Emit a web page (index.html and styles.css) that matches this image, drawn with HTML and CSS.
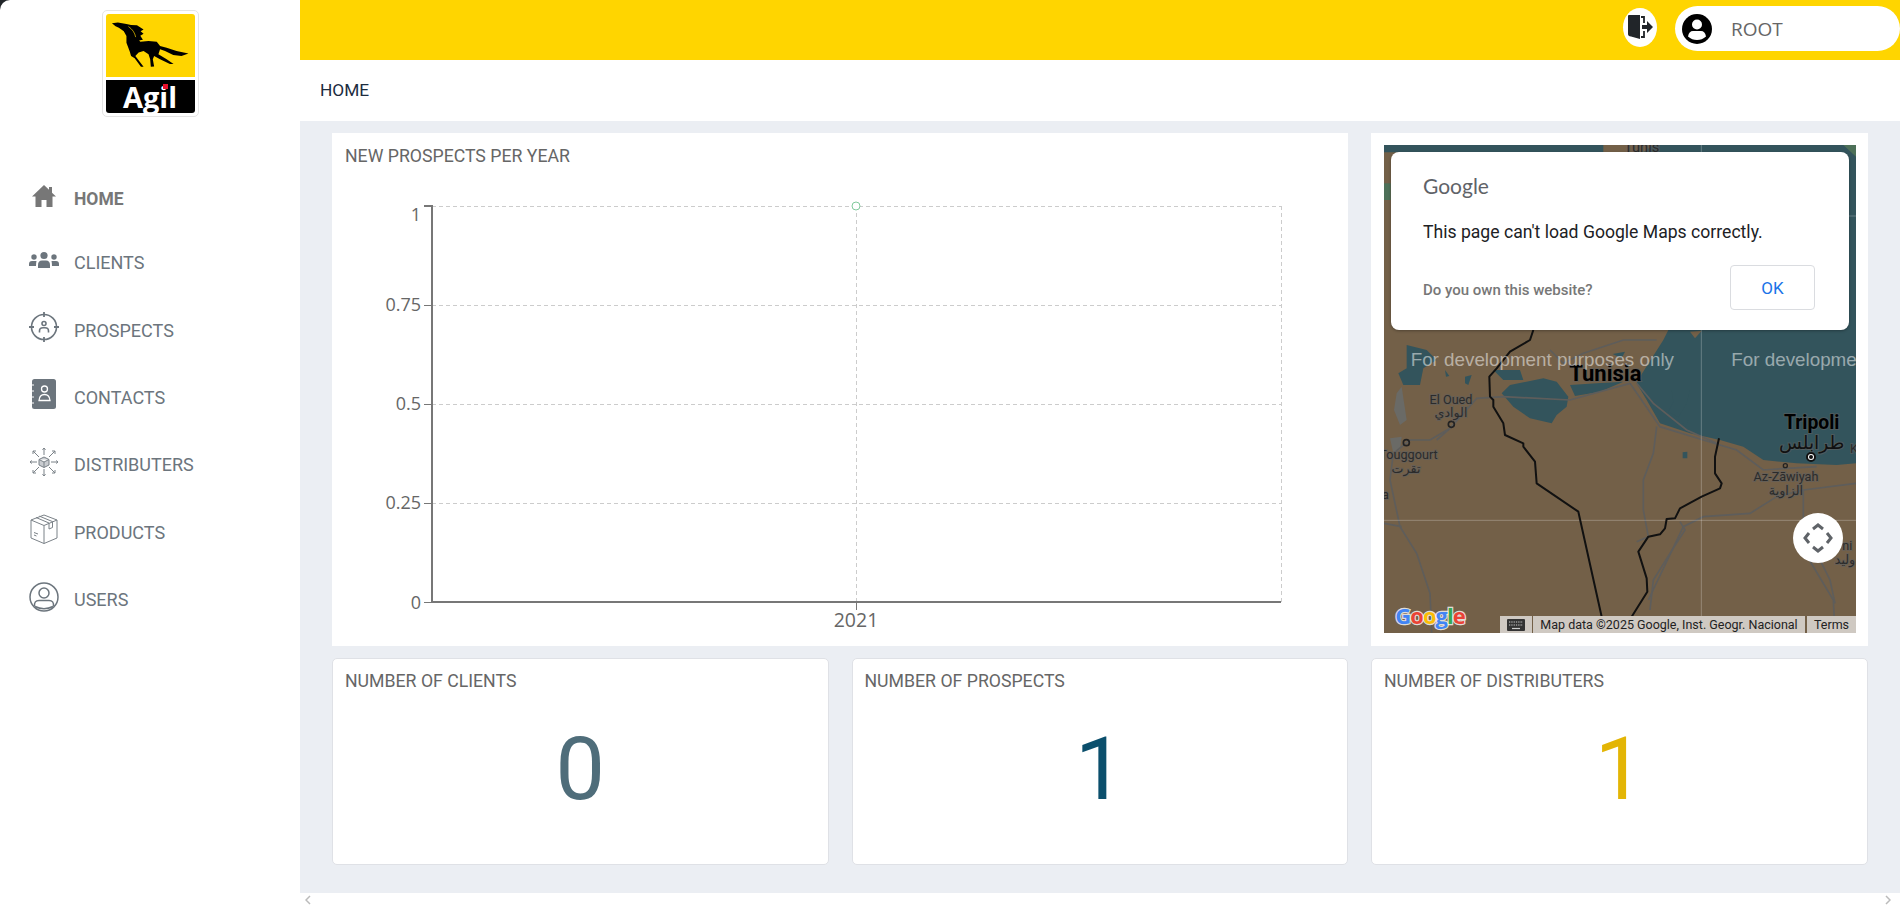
FILE: index.html
```html
<!DOCTYPE html>
<html lang="en">
  <head>
    <meta charset="UTF-8" />
    <title>Agil Dashboard</title>
    <link rel="stylesheet" href="styles.css">
  </head>
  <body>
    <div class="app">
      <aside class="sidebar">
        <div class="logo-wrap">
          <div class="logo">
            <div class="logo-top">
              <svg viewBox="316 40 270 187" class="horse">
                <path d="M334 66 L352 64 L378 68 L392 71 L410 72 L430 85 L421 90 L430 98 L420 104 L428 116 L415 118 L408 108 L420 122 L445 120 L470 122 L480 135 L500 140 L530 150 L566 158 L545 165 L520 162 L495 150 L480 145 L475 160 L500 175 L521 190 L510 190 L480 175 L462 165 L458 175 L462 197 L452 198 L450 175 L445 160 L430 150 L415 155 L405 165 L430 198 L422 198 L403 172 L392 165 L388 152 L378 125 L378 105 L370 90 L355 80 L345 75 Z" fill="#000" />
                <path d="M384 76 Q402 88 406 108" fill="none" stroke="#ffd500" stroke-width="2" />
              </svg>
            </div>
            <div class="logo-bottom"><span class="logo-name">Agil<i class="logo-dot"></i></span></div>
          </div>
        </div>
        <nav class="nav">
          <a class="nav-item active">
            <svg class="nav-icon" viewBox="0 0 30 30"><path d="M15 4 L3 15.500 L6.500 15.500 V26 H12.500 V19 H17.500 V26 H23.500 V15.500 L27 15.500 L23 11.700 V6 H20 V8.800 Z" fill="#777" /></svg>
            <span>HOME</span>
          </a>
          <a class="nav-item">
            <svg class="nav-icon" viewBox="0 0 30 30" fill="#6c757d">
              <circle cx="15" cy="10.500" r="3.600" /><path d="M9 23 V20 Q9 15.500 13 15.500 H17 Q21 15.500 21 20 V23 Z" />
              <circle cx="5" cy="12" r="2.700" /><path d="M0 21 V19 Q0 16 3 16 H7.500 Q7 18 7 21 Z" />
              <circle cx="25" cy="12" r="2.700" /><path d="M30 21 V19 Q30 16 27 16 H22.500 Q23 18 23 21 Z" />
            </svg>
            <span>CLIENTS</span>
          </a>
          <a class="nav-item">
            <svg class="nav-icon" viewBox="0 0 30 30" fill="none" stroke="#6c757d" stroke-width="1.600">
              <circle cx="15" cy="15" r="12.500" />
              <path d="M15 0 V5 M15 25 V30 M0 15 H5 M25 15 H30" stroke-width="1.800" />
              <circle cx="15" cy="11.500" r="2" />
              <path d="M10.500 20.500 V19 Q10.500 15.800 14 15.800 H16 Q19.500 15.800 19.500 19 V20.500" />
            </svg>
            <span>PROSPECTS</span>
          </a>
          <a class="nav-item">
            <svg class="nav-icon" viewBox="0 0 30 30">
              <rect x="3" y="0" width="24" height="30" rx="2.500" fill="#6c757d" />
              <path d="M3 6 H5 M3 12 H5 M3 18 H5 M3 24 H5" stroke="#fff" stroke-width="1" />
              <g fill="none" stroke="#fff" stroke-width="1.300">
                <circle cx="15.500" cy="10" r="3" />
                <path d="M10 21.500 Q10.500 15.500 15.500 15.500 Q20.500 15.500 21 21.500 Z" />
              </g>
            </svg>
            <span>CONTACTS</span>
          </a>
          <a class="nav-item">
            <svg class="nav-icon" viewBox="0 0 30 30" fill="none" stroke="#7b8288" stroke-width="1">
              <path d="M15 10 L20 12.500 V18 L15 20.500 L10 18 V12.500 Z M10 12.500 L15 15 L20 12.500 M15 15 V20.500" fill="#c9ccd0" />
              <path d="M15 8 V1 M13.500 2.800 L15 1 L16.500 2.800 M15 22 V29 M13.500 27.200 L15 29 L16.500 27.200 M8 15 H1 M2.800 13.500 L1 15 L2.800 16.500 M22 15 H29 M27.200 13.500 L29 15 L27.200 16.500" />
              <path d="M10 10 L4 4 M4 7 V4 H7 M20 10 L26 4 M23 4 H26 V7 M10 20 L4 26 M4 23 V26 H7 M20 20 L26 26 M23 26 H26 V23" />
            </svg>
            <span>DISTRIBUTERS</span>
          </a>
          <a class="nav-item">
            <svg class="nav-icon" viewBox="0 0 30 30" fill="none" stroke="#7b8288" stroke-width="1">
              <path d="M15 1 L28 6 V24 L15 29.500 L2 24 V6 Z" />
              <path d="M2 6 L15 11.500 L28 6 M15 11.500 V29.500" />
              <path d="M7 3.500 L20 9 V15 L23.500 13.500 V7.600 L10.500 2.200" />
              <path d="M5 18.500 L9 20 M5 21 L7.500 22" />
            </svg>
            <span>PRODUCTS</span>
          </a>
          <a class="nav-item">
            <svg class="nav-icon" viewBox="0 0 30 30" fill="none" stroke="#6c757d" stroke-width="1.500">
              <circle cx="15" cy="15" r="14" />
              <circle cx="15" cy="11" r="5" />
              <path d="M5.500 24 Q5 18.500 10 18.500 H20 Q25 18.500 24.500 24" />
              <path d="M6 24.500 Q15 29 24 24.500" />
            </svg>
            <span>USERS</span>
          </a>
        </nav>
      </aside>

      <main class="main">
        <header class="topbar">
          <button class="logout-btn">
            <svg viewBox="0 0 26 26" width="26" height="26">
              <path d="M1 2 Q1 1 2 1 H13 V25 L4 22.500 Q1 22 1 20 Z" fill="#212529" />
              <path d="M14 3 H17 V9 M17 17 V23 H14" fill="none" stroke="#212529" stroke-width="1.800" />
              <path d="M15 11 H20 V7 L26 13 L20 19 V15 H15 Z" fill="#212529" />
            </svg>
          </button>
          <div class="user-pill">
            <svg viewBox="0 0 30 30" width="30" height="30">
              <circle cx="15" cy="15" r="15" fill="#000" />
              <circle cx="15" cy="10.500" r="5" fill="#fff" />
              <path d="M6 22.500 Q7 17 11 17 H19 Q23 17 24 22.500 Q20 26 15 26 Q10 26 6 22.500 Z" fill="#fff" />
            </svg>
            <span>ROOT</span>
          </div>
        </header>
        <div class="crumb">HOME</div>

        <section class="content">
          <div class="card chart-card">
            <div class="card-title chart-title">NEW PROSPECTS PER YEAR</div>
            <svg class="chart" viewBox="332 170 1016 476">
              <g stroke="#ccc" stroke-dasharray="4 3" fill="none" shape-rendering="crispEdges">
                <path d="M432 206 H1281 M432 305 H1281 M432 404 H1281 M432 503 H1281" />
                <path d="M1281 206 V602 M856 206 V602" />
              </g>
              <g stroke="#777" fill="none" shape-rendering="crispEdges">
                <path d="M424 206 H432 V602 H1281" stroke-width="1.500" />
                <path d="M424 305 H432 M424 404 H432 M424 503 H432 M424 602 H432 M856 602 V610" stroke-width="1" />
              </g>
              <circle cx="856" cy="206" r="4" fill="#fff" stroke="#82ca9d" />
              <g class="chart-label" text-anchor="end">
                <text x="421" y="221">1</text>
                <text x="421" y="311">0.75</text>
                <text x="421" y="410">0.5</text>
                <text x="421" y="509">0.25</text>
                <text x="421" y="609">0</text>
              </g>
              <text class="chart-label chart-year" x="856" y="627" text-anchor="middle">2021</text>
            </svg>
          </div>

          <div class="card map-card">
            <div class="map">
              <svg class="map-svg" viewBox="42 -585 1416 1464">
                <rect x="42" y="-585" width="1416" height="1464" fill="#736048" />
                <path d="M42 -585 V-563 H700 L860 -560 L900 -40 L880 0 L810 110 L800 130 L830 180 L870 250 L960 280 L1050 300 L1120 320 L1180 360 L1280 370 L1400 375 L1458 370 V-585 Z" fill="#33545c" />
                <path d="M700 -585 H850 L820 -563 H700 Z" fill="#736048" />
                <path d="M1420 -585 H1458 V-550 Z" fill="#4d7058" />
                <path d="M42 -470 H62 V-420 H42 Z" fill="#4d7058" />
                <path d="M960 -25 L995 -28 L975 -5 Z" fill="#736048" />
                <path d="M80 160 L95 140 L110 240 L90 255 L72 210 Z M60 295 L95 290 L90 330 L70 340 Z" fill="#6a6a66" />
                <g fill="#33545c">
                  <path d="M110 15 L170 30 L200 60 L160 85 L150 135 L100 135 L85 100 L110 85 Z" />
                  <path d="M395 160 L420 135 L520 115 L560 125 L595 170 L590 200 L560 225 L545 250 L480 235 L430 200 Z" />
                  <path d="M600 135 L680 130 L760 125 L690 155 L615 168 Z" />
                  <path d="M370 90 L450 90 L460 120 L400 120 Z" />
                  <path d="M905 150 L960 150 L950 190 L925 232 L895 215 L910 185 Z" />
                  <path d="M938 252 L955 240 L945 265 Z M938 337 L952 335 L952 355 L938 355 Z M728 42 L765 35 L755 55 Z" />
                  <path d="M285 110 L305 105 L295 135 L285 130 Z M225 90 L238 108 L228 110 Z" />
                </g>
                <g fill="none" stroke="#5e5d5b" stroke-width="5">
                  <path d="M60 420 L90 560 L140 640 L180 760 L185 878" />
                  <path d="M42 550 L95 560" />
                  <path d="M860 260 L850 340 L820 420 L820 510 L835 590 L800 605" />
                  <path d="M835 780 L940 560 L1000 530 L1140 520 L1220 470 L1300 450 L1458 430" />
                  <path d="M1300 450 L1300 630 L1390 780 L1395 878" />
                  <path d="M780 130 L870 260 L1000 300 L1100 330 L1180 390 L1250 385 L1340 380" />
                  <path d="M200 300 L240 265 L320 175 L400 170 L600 180 L780 130" />
                  <path d="M540 30 L580 70 L640 40 L760 0 L860 0" />
                  <path d="M120 300 L180 300 L240 265 M60 420 L70 340 L120 300" />
                  <path d="M800 130 L850 190 L950 270 L1040 310" />
                  <path d="M930 545 L945 570 L900 640 L850 720 L840 810" />
                  <path d="M1340 640 L1380 720 L1395 790" />
                </g>
                <path d="M994 -585 V828 M42 541 H1458 M1000 -372 H1458" stroke="#fff" stroke-opacity="0.25" stroke-width="3" fill="none" />
                <g fill="none" stroke="#111" stroke-width="6" stroke-linejoin="round">
                  <path d="M490 -30 L480 0 L420 35 L380 85 L358 110 L360 170 L370 180 L370 200 L400 250 L405 285 L460 310 L460 320 L495 365 L500 430 L625 515 L695 830" />
                  <path d="M1047 295 L1035 350 L1035 400 L1055 430 L1050 445 L995 470 L930 505 L915 535 L890 537 L885 565 L870 583 L835 590 L805 635 L830 715 L832 755 L785 830" />
                </g>
                <g fill="none" stroke="#222" stroke-width="5">
                  <circle cx="244" cy="253" r="9" /><circle cx="109" cy="308" r="9" /><circle cx="1246" cy="377" r="6" stroke-width="4" />
                </g>
                <circle cx="1323" cy="351" r="12" fill="#fff" stroke="#111" stroke-width="6" />
                <circle cx="1323" cy="351" r="6" fill="#111" />
                <g class="map-label" text-anchor="middle">
                  <text x="243" y="192">El Oued</text>
                  <text x="243" y="232" class="arabic">الوادي</text>
                  <text x="203" y="358" text-anchor="end">Touggourt</text>
                  <text x="108" y="398" class="arabic">تقرت</text>
                  <text x="1248" y="424">Az-Zāwiyah</text>
                  <text x="1248" y="466" class="arabic">الزاوية</text>
                  <text x="46" y="478">a</text>
                  <text x="1452" y="338">K</text>
                  <text x="1432" y="630">ni</text>
                  <text x="1425" y="672" class="arabic">وليد</text>
                  <text x="815" y="-565" class="map-top">Tunis</text>
                  <text x="706" y="122" class="map-big map-tunisia">Tunisia</text>
                  <text x="1325" y="268" class="map-big">Tripoli</text>
                  <text x="1325" y="326" class="arabic map-big-ar">طرابلس</text>
                </g>
                <text class="map-dev" x="122" y="79">For development purposes only</text>
                <text class="map-dev" x="1084" y="79">For development purposes only</text>
                <text class="map-google" x="76" y="851"><tspan fill="#4285f4">G</tspan><tspan fill="#ea4335">o</tspan><tspan fill="#fbbc05">o</tspan><tspan fill="#4285f4">g</tspan><tspan fill="#34a853">l</tspan><tspan fill="#ea4335">e</tspan></text>
              </svg>

              <div class="map-dialog">
                <div class="dialog-logo">Google</div>
                <div class="dialog-text">This page can't load Google Maps correctly.</div>
                <div class="dialog-foot">
                  <span class="dialog-own">Do you own this website?</span>
                  <button class="dialog-ok">OK</button>
                </div>
              </div>

              <button class="map-move">
                <svg viewBox="0 0 30 30" width="30" height="30" fill="none" stroke="#5f6368" stroke-width="3">
                  <path d="M10 6 L15 2 L20 6 M10 24 L15 28 L20 24 M6 10 L2 15 L6 20 M24 10 L28 15 L24 20" />
                </svg>
              </button>

              <div class="map-attrib">
                <span class="attrib-key">
                  <svg viewBox="0 0 18 12" width="18" height="12">
                    <rect width="18" height="12" rx="1" fill="#333" />
                    <path d="M2 3 H16 M2 6 H16" stroke="#ccc" stroke-width="1.200" stroke-dasharray="1.300 1" />
                    <path d="M5 9.500 H13" stroke="#ccc" stroke-width="1.200" />
                  </svg>
                </span>
                <span class="attrib-data">Map data ©2025 Google, Inst. Geogr. Nacional</span>
                <span class="attrib-terms">Terms</span>
              </div>
            </div>
          </div>

          <div class="card stat-card">
            <div class="card-title">NUMBER OF CLIENTS</div>
            <div class="stat-value stat-clients">0</div>
          </div>
          <div class="card stat-card">
            <div class="card-title">NUMBER OF PROSPECTS</div>
            <div class="stat-value stat-prospects">1</div>
          </div>
          <div class="card stat-card">
            <div class="card-title">NUMBER OF DISTRIBUTERS</div>
            <div class="stat-value stat-distributers">1</div>
          </div>
        </section>

        <div class="scroll-strip">
          <svg viewBox="0 0 6 10" width="6" height="10"><path d="M5 1 L1 5 L5 9" fill="none" stroke="#bbb" stroke-width="1.500" /></svg>
          <svg viewBox="0 0 6 10" width="6" height="10"><path d="M1 1 L5 5 L1 9" fill="none" stroke="#bbb" stroke-width="1.500" /></svg>
        </div>
      </main>
    </div>
  </body>
</html>
```

FILE: styles.css
```css
* {
  box-sizing: border-box;
}
html,
body {
  margin: 0;
  height: 100%;
  overflow: hidden;
}
body {
  font-family: Roboto, "Liberation Sans", sans-serif;
  background-color: #212529;
  color: #666;
}
.app {
  display: flex;
  height: 906px;
}

/* sidebar */
.sidebar {
  width: 300px;
  flex-shrink: 0;
  background-color: white;
  border-top-left-radius: 10px;
}
.logo-wrap {
  display: flex;
  justify-content: center;
  padding-top: 10px;
}
.logo {
  width: 97px;
  height: 107px;
  padding: 3px;
  background: white;
  border: 1px solid #e4e4e4;
  border-radius: 5px;
  display: flex;
  flex-direction: column;
  gap: 3px;
}
.logo-top {
  height: 63px;
  background-color: #ffd500;
  border-radius: 3px 3px 0 0;
}
.horse {
  display: block;
  width: 100%;
  height: 100%;
}
.logo-bottom {
  flex: 1;
  background-color: black;
  border-radius: 0 0 3px 3px;
  display: flex;
  align-items: center;
  justify-content: center;
}
.logo-name {
  position: relative;
  color: white;
  font-family: "Open Sans", sans-serif;
  font-weight: 700;
  font-size: 29px;
  line-height: 1;
}
.logo-dot {
  position: absolute;
  top: 2px;
  left: 40px;
  width: 5px;
  height: 5px;
  background-color: #e8112d;
}
.nav {
  margin-top: 52px;
}
.nav-item {
  height: 67.4px;
  padding-left: 29px;
  display: flex;
  align-items: center;
  gap: 15px;
  font-size: 18px;
  color: #6c757d;
}
.nav-item.active {
  height: 60px;
  font-size: 17.5px;
  font-weight: 700;
  color: #777;
}
.nav-icon {
  width: 30px;
  height: 30px;
  margin-bottom: 6px;
  flex-shrink: 0;
}

/* main column */
.main {
  flex: 1;
  min-width: 0;
  display: flex;
  flex-direction: column;
  background-color: white;
}
.topbar {
  height: 60px;
  background-color: #ffd500;
  display: flex;
  align-items: center;
  justify-content: flex-end;
  gap: 18px;
}
.logout-btn {
  width: 34px;
  height: 39px;
  padding: 0;
  border: none;
  border-radius: 50%;
  background-color: white;
  display: flex;
  align-items: center;
  justify-content: center;
  margin-top: -6px;
}
.user-pill {
  width: 225px;
  height: 45px;
  padding-left: 7px;
  background-color: white;
  border-radius: 23px;
  display: flex;
  align-items: center;
  gap: 19px;
  font-family: "Open Sans", sans-serif;
  font-size: 19px;
  color: #666;
  margin-top: -3px;
}
.crumb {
  height: 61px;
  padding: 0 0 2px 20px;
  display: flex;
  align-items: center;
  font-size: 17.3px;
  color: #1d2c3f;
}
.content {
  flex: 1;
  display: grid;
  grid-template-columns: repeat(3, 1fr);
  grid-template-rows: 513px 207px;
  column-gap: 23px;
  row-gap: 12px;
  padding: 12px 32px 28px;
  background-color: #ebeef3;
}
.card {
  background-color: white;
}
.card-title {
  font-size: 17.7px;
  line-height: 20px;
  color: #666;
}
.chart-card {
  grid-column: span 2;
  display: flex;
  flex-direction: column;
}
.chart-title {
  height: 37px;
  padding: 13px 0 0 13px;
}
.chart {
  display: block;
  width: 100%;
  height: 476px;
}
.chart-label text,
text.chart-label {
  font-family: "Open Sans", sans-serif;
  font-size: 18px;
  fill: #666;
}
text.chart-year {
  font-size: 19.5px;
}

/* map */
.map-card {
  padding: 12px 12px 13px 13px;
}
.map {
  position: relative;
  height: 488px;
  overflow: hidden;
}
.map-svg {
  display: block;
  width: 472px;
  height: 488px;
}
.map-label text {
  font-family: Roboto, sans-serif;
  font-size: 38px;
  fill: #2b2b2b;
  stroke: rgba(95, 95, 95, 0.6);
  stroke-width: 6px;
  paint-order: stroke;
}
.map-label text.arabic {
  font-family: "DejaVu Sans", sans-serif;
  font-size: 38px;
}
.map-label text.map-big {
  font-size: 58px;
  font-weight: 700;
  fill: #000;
}
.map-label text.map-tunisia {
  font-size: 66px;
}
.map-label text.map-top {
  font-size: 44px;
}
.map-label text.map-big-ar {
  font-size: 56px;
  fill: #111;
}
.map-dev {
  font-family: "Liberation Sans", sans-serif;
  font-size: 56.4px;
  fill: rgba(255, 255, 255, 0.5);
}
.map-google {
  font-family: "Open Sans", sans-serif;
  font-weight: 700;
  font-size: 66px;
  letter-spacing: -3px;
  stroke: rgba(255, 255, 255, 0.8);
  stroke-width: 7px;
  paint-order: stroke;
}
.map-dialog {
  position: absolute;
  top: 7px;
  left: 7px;
  width: 458px;
  height: 178px;
  padding: 21px 34px 0 32px;
  background-color: white;
  border-radius: 8px;
  box-shadow: 0 1px 3px rgba(0, 0, 0, 0.3);
}
.dialog-logo {
  font-family: Lato, sans-serif;
  font-size: 21px;
  line-height: 26px;
  color: #5f6368;
}
.dialog-text {
  margin-top: 23px;
  font-size: 17.6px;
  font-weight: 400;
  color: #202124;
}
.dialog-foot {
  margin-top: 23px;
  display: flex;
  align-items: center;
  justify-content: space-between;
}
.dialog-own {
  font-size: 15px;
  font-weight: 500;
  color: #777;
  padding-top: 5px;
}
.dialog-ok {
  width: 85px;
  height: 45px;
  padding: 0;
  background: white;
  border: 1px solid #dadce0;
  border-radius: 4px;
  font-family: Roboto, sans-serif;
  font-size: 17px;
  color: #1a73e8;
}
.map-move {
  position: absolute;
  top: 368px;
  left: 409px;
  width: 50px;
  height: 50px;
  padding: 0;
  border: none;
  border-radius: 50%;
  background-color: white;
  display: flex;
  align-items: center;
  justify-content: center;
}
.map-attrib {
  position: absolute;
  right: 0;
  bottom: 0;
  height: 17px;
  display: flex;
  gap: 1px;
  font-size: 12.5px;
  line-height: 17px;
  color: #222;
}
.map-attrib span {
  background-color: #cfc9c2;
}
.attrib-key {
  width: 32px;
  display: flex;
  align-items: center;
  justify-content: center;
}
.attrib-data {
  width: 272px;
  text-align: center;
}
.attrib-terms {
  width: 49px;
  text-align: center;
  margin-left: 1px;
}

/* stat cards */
.stat-card {
  padding: 12px 12px;
  border: 1px solid #dfe1e6;
  border-radius: 5px;
}
.stat-value {
  margin-top: 25px;
  text-align: center;
  font-size: 88px;
  font-weight: 400;
  line-height: 106px;
}
.stat-clients {
  color: #4f6d7a;
}
.stat-prospects {
  color: #0b4f6c;
}
.stat-distributers {
  color: #e3b505;
}
.scroll-strip {
  height: 13px;
  padding: 0 9px 0 5px;
  display: flex;
  align-items: center;
  justify-content: space-between;
}
```
